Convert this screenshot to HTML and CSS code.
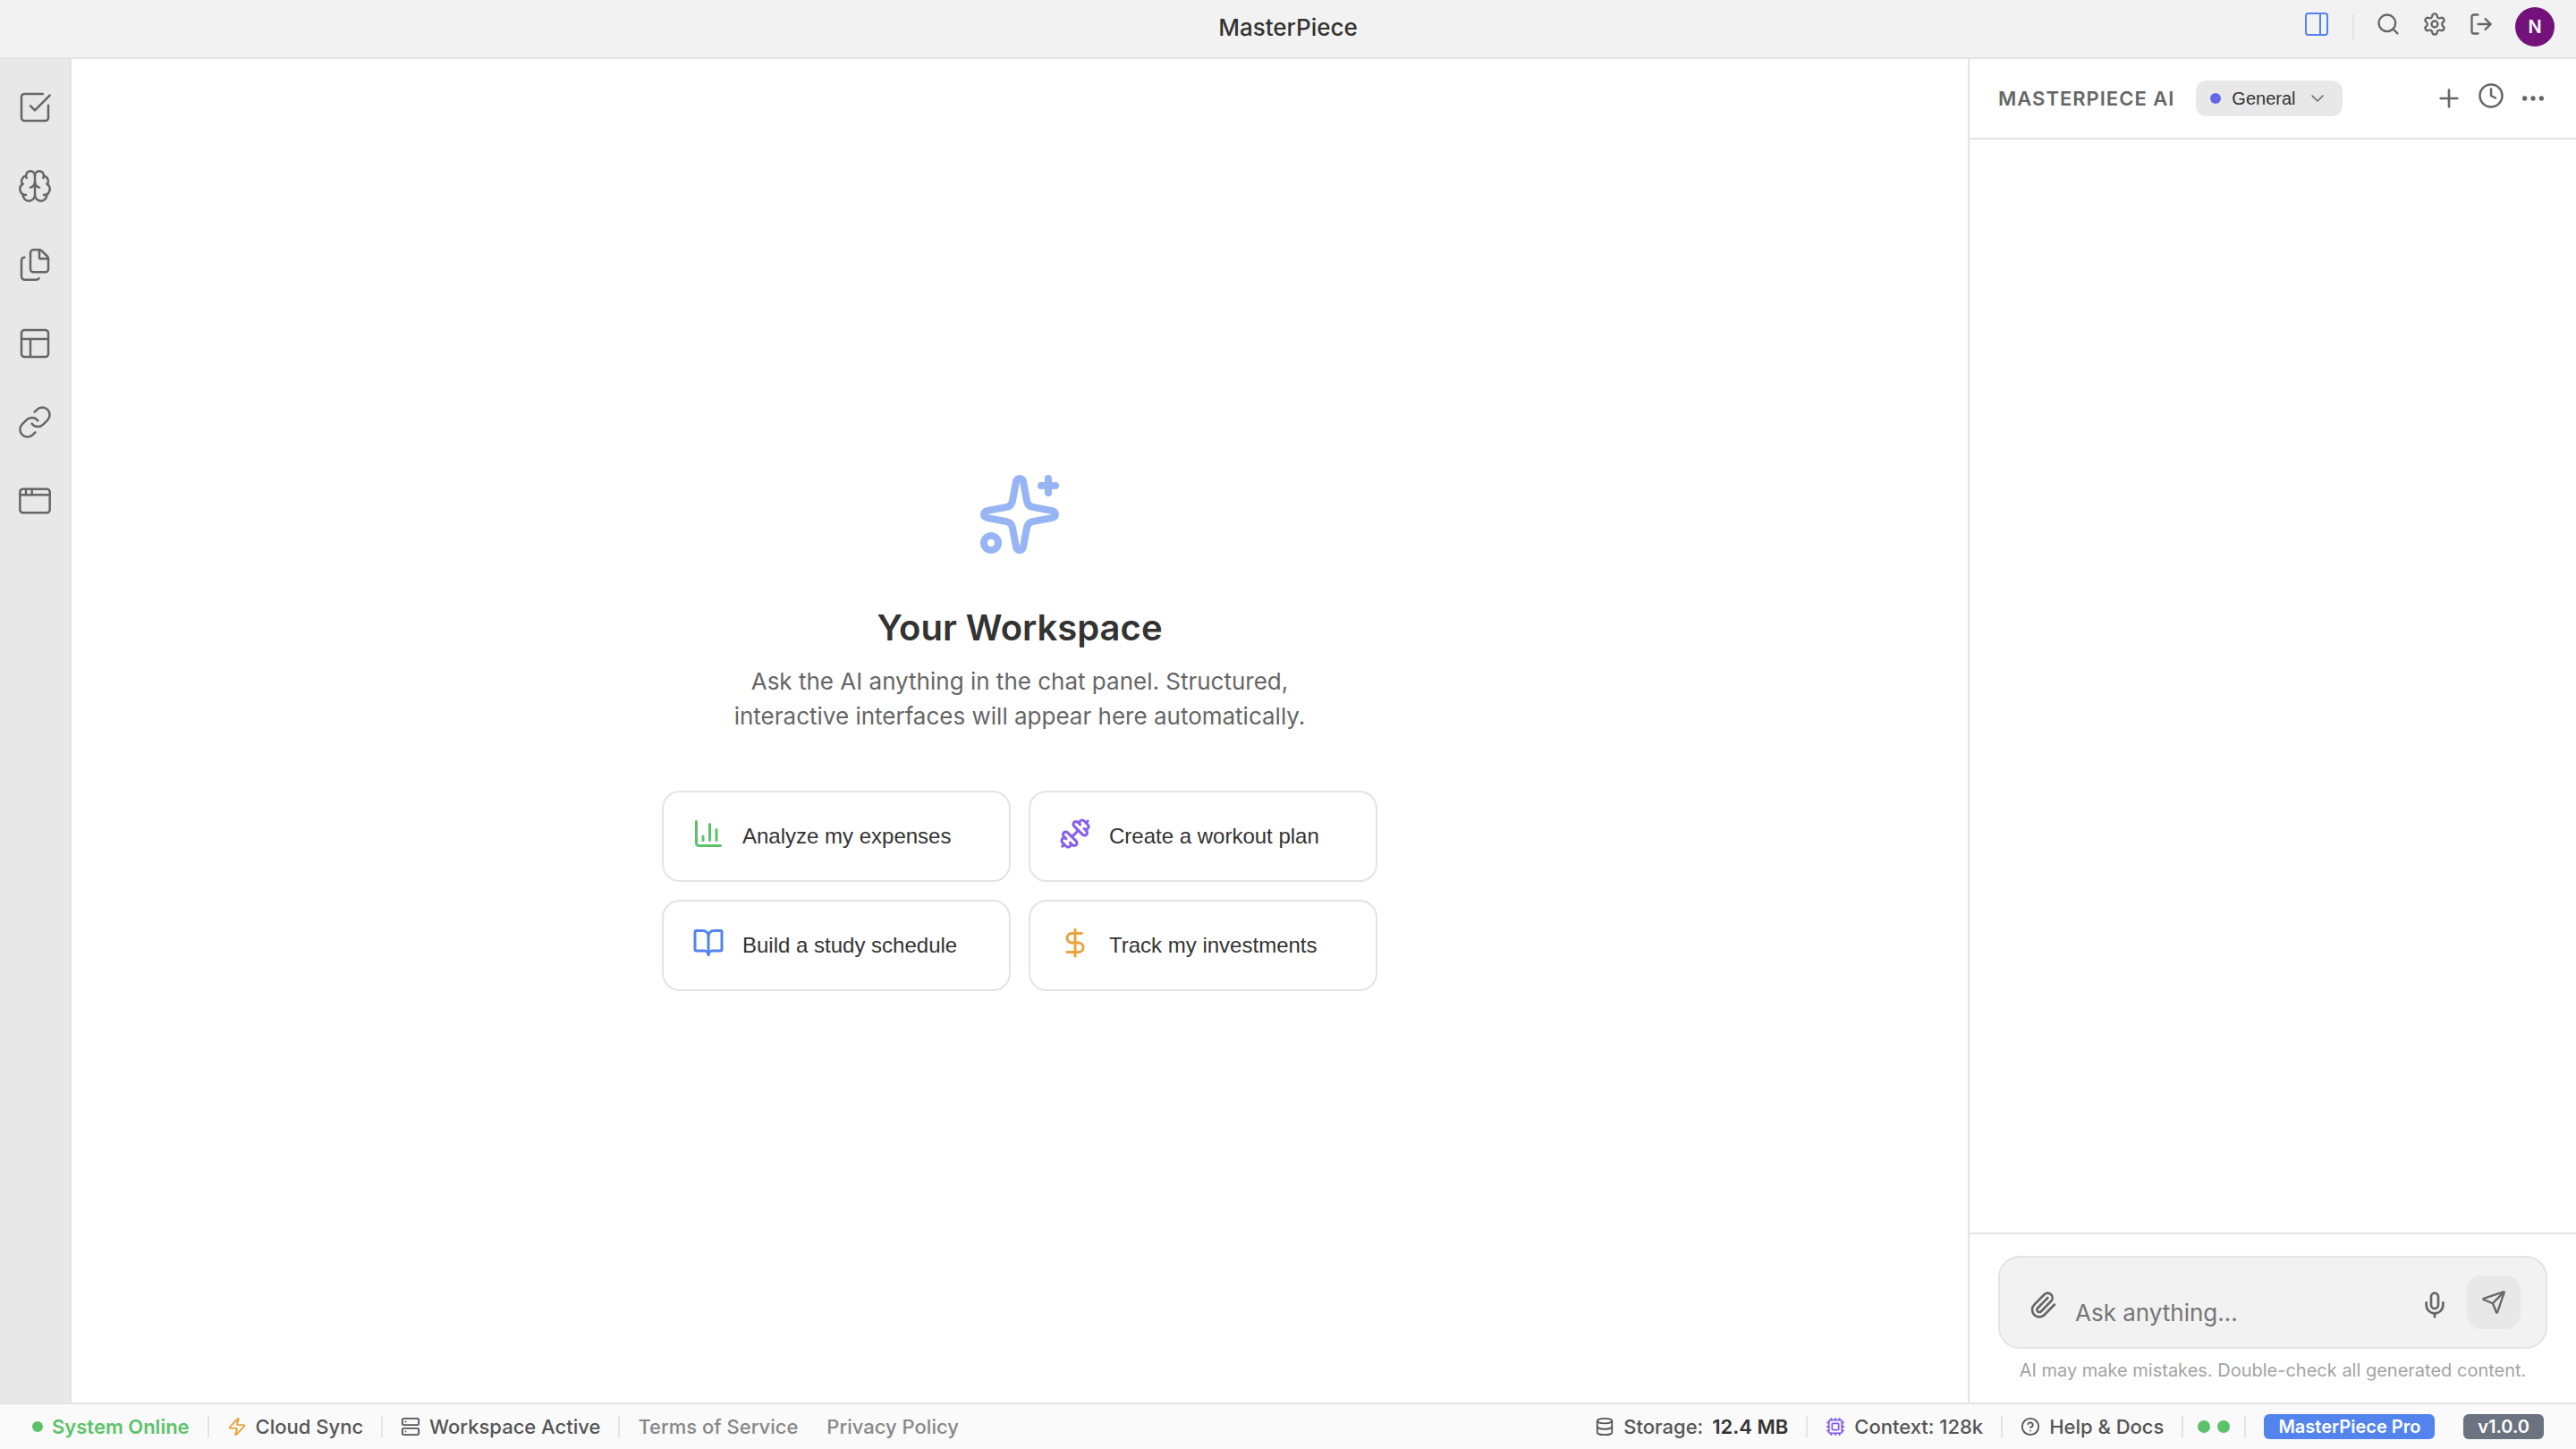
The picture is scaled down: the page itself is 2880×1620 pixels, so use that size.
FILE: index.html
```html
<!DOCTYPE html>
<html lang="en">
<head>
    <meta charset="UTF-8">
    <meta name="viewport" content="width=device-width, initial-scale=1.0">
    <title>MasterPiece</title>
    <link rel="stylesheet" href="styles.css">
</head>
<body>
    <header class="topbar">
        <h1 class="app-title">MasterPiece</h1>
        <div class="top-actions">
            <button class="icon-btn active" aria-label="Toggle panel">
                <svg class="icon i32 thin" viewBox="0 0 24 24"><rect x="3" y="3" width="18" height="18" rx="2"/><path d="M15 3v18"/></svg>
            </button>
            <span class="top-divider"></span>
            <button class="icon-btn" aria-label="Search">
                <svg class="icon i28" viewBox="0 0 24 24"><circle cx="11" cy="11" r="8"/><path d="m21 21-4.34-4.34"/></svg>
            </button>
            <button class="icon-btn" aria-label="Settings">
                <svg class="icon i28" viewBox="0 0 24 24"><path d="M9.671 4.136a2.34 2.34 0 0 1 4.659 0 2.34 2.34 0 0 0 3.319 1.915 2.34 2.34 0 0 1 2.33 4.033 2.34 2.34 0 0 0 0 3.831 2.34 2.34 0 0 1-2.33 4.033 2.34 2.34 0 0 0-3.319 1.915 2.34 2.34 0 0 1-4.659 0 2.34 2.34 0 0 0-3.32-1.915 2.34 2.34 0 0 1-2.33-4.033 2.34 2.34 0 0 0 0-3.831A2.34 2.34 0 0 1 6.35 6.051a2.34 2.34 0 0 0 3.319-1.915"/><circle cx="12" cy="12" r="3"/></svg>
            </button>
            <button class="icon-btn" aria-label="Log out">
                <svg class="icon i28" viewBox="0 0 24 24"><path d="m16 17 5-5-5-5"/><path d="M21 12H9"/><path d="M9 21H5a2 2 0 0 1-2-2V5a2 2 0 0 1 2-2h4"/></svg>
            </button>
            <button class="avatar">N</button>
        </div>
    </header>

    <div class="layout">
        <nav class="sidebar">
            <button class="side-btn" aria-label="Tasks">
                <svg class="icon i40 thin" viewBox="0 0 24 24"><path d="M21 10.656V19a2 2 0 0 1-2 2H5a2 2 0 0 1-2-2V5a2 2 0 0 1 2-2h12.344"/><path d="m9 11 3 3L22 4"/></svg>
            </button>
            <button class="side-btn" aria-label="Memory">
                <svg class="icon i40 thin" viewBox="0 0 24 24"><path d="M12 18V5"/><path d="M15 13a4.17 4.17 0 0 1-3-4 4.17 4.17 0 0 1-3 4"/><path d="M17.598 6.5A3 3 0 1 0 12 5a3 3 0 1 0-5.598 1.5"/><path d="M17.997 5.125a4 4 0 0 1 2.526 5.77"/><path d="M18 18a4 4 0 0 0 2-7.464"/><path d="M19.967 17.483A4 4 0 1 1 12 18a4 4 0 1 1-7.967-.517"/><path d="M6 18a4 4 0 0 1-2-7.464"/><path d="M6.003 5.125a4 4 0 0 0-2.526 5.77"/></svg>
            </button>
            <button class="side-btn" aria-label="Files">
                <svg class="icon i40 thin" viewBox="0 0 24 24"><path d="M15 2h-4a2 2 0 0 0-2 2v11a2 2 0 0 0 2 2h8a2 2 0 0 0 2-2V8"/><path d="M16.706 2.706A2.4 2.4 0 0 0 15 2v5a1 1 0 0 0 1 1h5a2.4 2.4 0 0 0-.706-1.706z"/><path d="M5 7a2 2 0 0 0-2 2v11a2 2 0 0 0 2 2h8a2 2 0 0 0 1.732-1"/></svg>
            </button>
            <button class="side-btn" aria-label="Layouts">
                <svg class="icon i40 thin" viewBox="0 0 24 24"><rect x="3" y="3" width="18" height="18" rx="2"/><path d="M3 9h18"/><path d="M9 21V9"/></svg>
            </button>
            <button class="side-btn" aria-label="Links">
                <svg class="icon i40 thin" viewBox="0 0 24 24"><path d="M10 13a5 5 0 0 0 7.54.54l3-3a5 5 0 0 0-7.07-7.07l-1.72 1.71"/><path d="M14 11a5 5 0 0 0-7.54-.54l-3 3a5 5 0 0 0 7.07 7.07l1.71-1.71"/></svg>
            </button>
            <button class="side-btn" aria-label="Windows">
                <svg class="icon i40 thin" viewBox="0 0 24 24"><rect x="2" y="4" width="20" height="16" rx="2"/><path d="M10 4v4"/><path d="M2 8h20"/><path d="M6 4v4"/></svg>
            </button>
        </nav>

        <main class="workspace">
            <svg class="icon hero-icon" viewBox="0 0 24 24"><path d="M11.017 2.814a1 1 0 0 1 1.966 0l1.051 5.558a2 2 0 0 0 1.594 1.594l5.558 1.051a1 1 0 0 1 0 1.966l-5.558 1.051a2 2 0 0 0-1.594 1.594l-1.051 5.558a1 1 0 0 1-1.966 0l-1.051-5.558a2 2 0 0 0-1.594-1.594l-5.558-1.051a1 1 0 0 1 0-1.966l5.558-1.051a2 2 0 0 0 1.594-1.594z"/><path d="M20 2v4"/><path d="M22 4h-4"/><circle cx="4" cy="20" r="2"/></svg>
            <h2>Your Workspace</h2>
            <p class="intro">Ask the AI anything in the chat panel. Structured, interactive interfaces will appear here automatically.</p>
            <div class="suggestions">
                <button class="card">
                    <svg class="icon i36 green" viewBox="0 0 24 24"><path d="M3 3v16a2 2 0 0 0 2 2h16"/><path d="M18 17V9"/><path d="M13 17V5"/><path d="M8 17v-3"/></svg>
                    <span>Analyze my expenses</span>
                </button>
                <button class="card">
                    <svg class="icon i36 purple" viewBox="0 0 24 24"><path d="M17.596 12.768a2 2 0 1 0 2.829-2.829l-1.768-1.767a2 2 0 0 0 2.828-2.829l-2.828-2.828a2 2 0 0 0-2.829 2.828l-1.767-1.768a2 2 0 1 0-2.829 2.829z"/><path d="m2.5 21.5 1.4-1.4"/><path d="m20.1 3.9 1.4-1.4"/><path d="M5.343 21.485a2 2 0 1 0 2.829-2.828l1.767 1.768a2 2 0 1 0 2.829-2.829l-6.364-6.364a2 2 0 1 0-2.829 2.829l1.768 1.767a2 2 0 0 0-2.828 2.829z"/><path d="m9.6 14.4 4.8-4.8"/></svg>
                    <span>Create a workout plan</span>
                </button>
                <button class="card">
                    <svg class="icon i36 blue" viewBox="0 0 24 24"><path d="M12 7v14"/><path d="M3 18a1 1 0 0 1-1-1V4a1 1 0 0 1 1-1h5a4 4 0 0 1 4 4 4 4 0 0 1 4-4h5a1 1 0 0 1 1 1v13a1 1 0 0 1-1 1h-6a3 3 0 0 0-3 3 3 3 0 0 0-3-3z"/></svg>
                    <span>Build a study schedule</span>
                </button>
                <button class="card">
                    <svg class="icon i36 orange" viewBox="0 0 24 24"><path d="M12 2v20"/><path d="M17 5H9.5a3.5 3.5 0 0 0 0 7h5a3.5 3.5 0 0 1 0 7H6"/></svg>
                    <span>Track my investments</span>
                </button>
            </div>
        </main>

        <aside class="chat">
            <div class="chat-header">
                <h3>MASTERPIECE AI</h3>
                <button class="mode">
                    <span class="dot indigo"></span>
                    General
                    <svg class="icon i24 thin" viewBox="0 0 24 24"><path d="m6 9 6 6 6-6"/></svg>
                </button>
                <div class="chat-tools">
                    <button aria-label="New chat">
                        <svg class="icon i32" viewBox="0 0 24 24"><path d="M5 12h14"/><path d="M12 5v14"/></svg>
                    </button>
                    <button class="icon-btn" aria-label="History">
                        <svg class="icon i30" viewBox="0 0 24 24"><circle cx="12" cy="12" r="10"/><path d="M12 6v6l4 2"/></svg>
                    </button>
                    <button aria-label="More">
                        <svg class="icon i32" viewBox="0 0 24 24"><circle cx="12" cy="12" r="1"/><circle cx="19" cy="12" r="1"/><circle cx="5" cy="12" r="1"/></svg>
                    </button>
                </div>
            </div>
            <div class="messages"></div>
            <div class="composer">
                <div class="input-box">
                    <button class="input-btn" aria-label="Attach file">
                        <svg class="icon i32" viewBox="0 0 24 24"><path d="m16 6-8.414 8.586a2 2 0 0 0 2.829 2.829l8.414-8.586a4 4 0 1 0-5.657-5.657l-8.379 8.551a6 6 0 1 0 8.485 8.485l8.379-8.551"/></svg>
                    </button>
                    <textarea rows="1" placeholder="Ask anything..." aria-label="Message"></textarea>
                    <button class="input-btn" aria-label="Voice input">
                        <svg class="icon i32" viewBox="0 0 24 24"><path d="M12 19v3"/><path d="M19 10v2a7 7 0 0 1-14 0v-2"/><rect x="9" y="2" width="6" height="13" rx="3"/></svg>
                    </button>
                    <button class="send" aria-label="Send">
                        <svg class="icon i28" viewBox="0 0 24 24"><path d="M14.536 21.686a.5.5 0 0 0 .937-.024l6.5-19a.496.496 0 0 0-.635-.635l-19 6.5a.5.5 0 0 0-.024.937l7.93 3.18a2 2 0 0 1 1.112 1.11z"/><path d="m21.854 2.147-10.94 10.939"/></svg>
                    </button>
                </div>
                <p class="disclaimer">AI may make mistakes. Double-check all generated content.</p>
            </div>
        </aside>
    </div>

    <footer class="statusbar">
        <div class="status-group">
            <span class="status online"><span class="dot"></span>System Online</span>
            <span class="status">
                <svg class="icon i22 orange" viewBox="0 0 24 24"><path d="M4 14a1 1 0 0 1-.78-1.63l9.9-10.2a.5.5 0 0 1 .86.46l-1.92 6.02A1 1 0 0 0 13 10h7a1 1 0 0 1 .78 1.63l-9.9 10.2a.5.5 0 0 1-.86-.46l1.92-6.02A1 1 0 0 0 11 14z"/></svg>
                Cloud Sync
            </span>
            <span class="status">
                <svg class="icon i22" viewBox="0 0 24 24"><rect x="2" y="2" width="20" height="8" rx="2"/><rect x="2" y="14" width="20" height="8" rx="2"/><path d="M6 6h.01"/><path d="M6 18h.01"/></svg>
                Workspace Active
            </span>
            <span class="status links"><a href="#">Terms of Service</a><a href="#">Privacy Policy</a></span>
        </div>
        <div class="status-group">
            <span class="status">
                <svg class="icon i22" viewBox="0 0 24 24"><ellipse cx="12" cy="5" rx="9" ry="3"/><path d="M3 5v14a9 3 0 0 0 18 0V5"/><path d="M3 12a9 3 0 0 0 18 0"/></svg>
                Storage: <strong>12.4 MB</strong>
            </span>
            <span class="status">
                <svg class="icon i22 purple" viewBox="0 0 24 24"><path d="M12 20v2M12 2v2M17 20v2M17 2v2M2 12h2M2 17h2M2 7h2M20 12h2M20 17h2M20 7h2M7 20v2M7 2v2"/><rect x="4" y="4" width="16" height="16" rx="2"/><rect x="8" y="8" width="8" height="8" rx="1"/></svg>
                Context: 128k
            </span>
            <span class="status">
                <svg class="icon i22" viewBox="0 0 24 24"><circle cx="12" cy="12" r="10"/><path d="M9.09 9a3 3 0 0 1 5.83 1c0 2-3 3-3 3"/><path d="M12 17h.01"/></svg>
                Help &amp; Docs
            </span>
            <span class="status lights"><span class="light"></span><span class="light"></span></span>
            <span class="status badges"><span class="badge pro">MasterPiece Pro</span><span class="badge">v1.0.0</span></span>
        </div>
    </footer>
</body>
</html>
```
FILE: styles.css
```css
* {
    box-sizing: border-box;
    margin: 0;
    padding: 0;
}

body {
    display: flex;
    flex-direction: column;
    min-height: 100vh;
    font-family: Inter, sans-serif;
    font-size: 22px;
    color: #333;
    background: #fff;
}

button {
    display: block;
    border: none;
    background: none;
    color: #666;
    font-family: "Liberation Sans", Arial, sans-serif;
    cursor: pointer;
}

/* icons */
.icon {
    display: block;
    flex-shrink: 0;
    fill: none;
    stroke: currentColor;
    stroke-width: 2;
    stroke-linecap: round;
    stroke-linejoin: round;
}
.thin { stroke-width: 1.5; }
.i22 { width: 22px; height: 22px; }
.i24 { width: 24px; height: 24px; }
.i28 { width: 28px; height: 28px; }
.i30 { width: 30px; height: 30px; }
.i32 { width: 32px; height: 32px; }
.i36 { width: 36px; height: 36px; }
.i40 { width: 40px; height: 40px; }

.green { color: #5cc26a; }
.purple { color: #8560f0; }
.blue { color: #5384ee; }
.orange { color: #eaa23b; }

/* top bar */
.topbar {
    display: grid;
    grid-template-columns: 1fr auto 1fr;
    align-items: center;
    padding: 8px 24px 12px;
    background: #f2f2f2;
    border-bottom: 2px solid #e4e4e4;
}
.app-title {
    grid-column: 2;
    padding-top: 2px;
    font-size: 26px;
    font-weight: 500;
    line-height: 32px;
}
.top-actions {
    display: flex;
    justify-content: flex-end;
    align-items: center;
    gap: 24px;
}
.icon-btn {
    padding-bottom: 6px;
}
.icon-btn.active {
    color: #5384ee;
}
.top-divider {
    width: 2px;
    height: 28px;
    background: #e4e4e4;
}
.avatar {
    width: 44px;
    height: 44px;
    border-radius: 50%;
    background: #73127a;
    color: #fff;
    font-family: Inter, sans-serif;
    font-size: 20px;
    font-weight: 600;
}

/* main layout */
.layout {
    display: flex;
    flex: 1;
}
.sidebar {
    display: flex;
    flex-direction: column;
    align-items: center;
    gap: 32px;
    width: 80px;
    padding-top: 26px;
    background: #e8e8e8;
    border-right: 2px solid #e4e4e4;
}
.side-btn {
    padding: 8px;
}

.workspace {
    display: flex;
    flex: 1;
    flex-direction: column;
    align-items: center;
    justify-content: center;
}
.hero-icon {
    width: 96px;
    height: 96px;
    margin-bottom: 53px;
    color: #5384ee;
    opacity: 0.6;
}
.workspace h2 {
    margin-bottom: 14px;
    font-size: 40px;
    font-weight: 600;
    line-height: 52px;
}
.intro {
    max-width: 680px;
    margin-bottom: 64px;
    color: #666;
    font-size: 26px;
    line-height: 39px;
    text-align: center;
}
.suggestions {
    display: grid;
    grid-template-columns: 1fr 1fr;
    gap: 20px;
    width: 800px;
}
.card {
    display: flex;
    align-items: center;
    gap: 20px;
    height: 102px;
    padding: 0 32px;
    border: 2px solid #e4e4e4;
    border-radius: 20px;
    background: #fff;
    font-size: 24px;
}
.card span {
    color: #333;
}
.card .icon {
    margin-bottom: 6px;
}

/* chat panel */
.chat {
    display: flex;
    flex-direction: column;
    width: 680px;
    border-left: 2px solid #e4e4e4;
}
.chat-header {
    display: flex;
    align-items: center;
    gap: 24px;
    height: 90px;
    padding: 0 32px;
    border-bottom: 2px solid #e4e4e4;
}
.chat-header h3 {
    color: #666;
    font-size: 22px;
    font-weight: 600;
    letter-spacing: 1px;
}
.mode {
    display: flex;
    align-items: center;
    gap: 12px;
    height: 40px;
    padding: 0 16px;
    border-radius: 12px;
    background: #e8e8e8;
    color: #333;
    font-size: 20px;
}
.mode .icon {
    color: #666;
}
.dot {
    width: 12px;
    height: 12px;
    border-radius: 50%;
    background: currentColor;
}
.indigo {
    color: #6466e9;
}
.chat-tools {
    display: flex;
    align-items: center;
    gap: 16px;
    margin-left: auto;
}
.messages {
    flex: 1;
}
.composer {
    padding: 24px 32px;
    border-top: 2px solid #e4e4e4;
}
.input-box {
    display: flex;
    align-items: center;
    gap: 20px;
    padding: 20px 28px 20px 32px;
    border: 2px solid #e4e4e4;
    border-radius: 24px;
    background: #f2f2f2;
}
.input-btn {
    padding-top: 6px;
}
.input-box textarea {
    flex: 1;
    min-width: 0;
    height: 60px;
    padding-top: 24px;
    border: none;
    outline: none;
    resize: none;
    background: none;
    color: #333;
    font-family: Inter, sans-serif;
    font-size: 26px;
    line-height: 36px;
}
.input-box textarea::placeholder {
    color: #757575;
}
.send {
    padding: 16px;
    border-radius: 16px;
    background: #e8e8e8;
}
.disclaimer {
    margin-top: 12px;
    color: #a3a3a3;
    font-size: 20px;
    line-height: 24px;
    text-align: center;
}

/* status bar */
.statusbar {
    display: flex;
    justify-content: space-between;
    align-items: center;
    height: 52px;
    padding: 0 36px;
    border-top: 2px solid #e4e4e4;
    background: #fafafa;
    color: #555;
    font-weight: 500;
}
.status-group {
    display: flex;
    align-items: center;
}
.status {
    display: flex;
    align-items: center;
    gap: 10px;
    height: 24px;
    padding: 0 20px;
    border-left: 2px solid #e4e4e4;
    white-space: nowrap;
}
.status:first-child {
    padding-left: 0;
    border-left: none;
}
.status:last-child {
    padding-right: 0;
}
.status strong {
    color: #333;
    font-weight: 600;
}
.online {
    color: #5cc26a;
    font-weight: 600;
}
.links {
    gap: 32px;
}
.links a {
    color: #888;
    text-decoration: none;
}
.lights {
    gap: 8px;
    padding: 0 16px;
}
.light {
    width: 14px;
    height: 14px;
    border-radius: 50%;
    background: #5cc26a;
}
.badges {
    gap: 32px;
}
.badge {
    padding: 0 16px;
    border-radius: 6px;
    background: #6b7280;
    color: #fff;
    font-size: 20px;
    font-weight: 600;
    line-height: 28px;
}
.badge.pro {
    background: #5384ee;
}
```
